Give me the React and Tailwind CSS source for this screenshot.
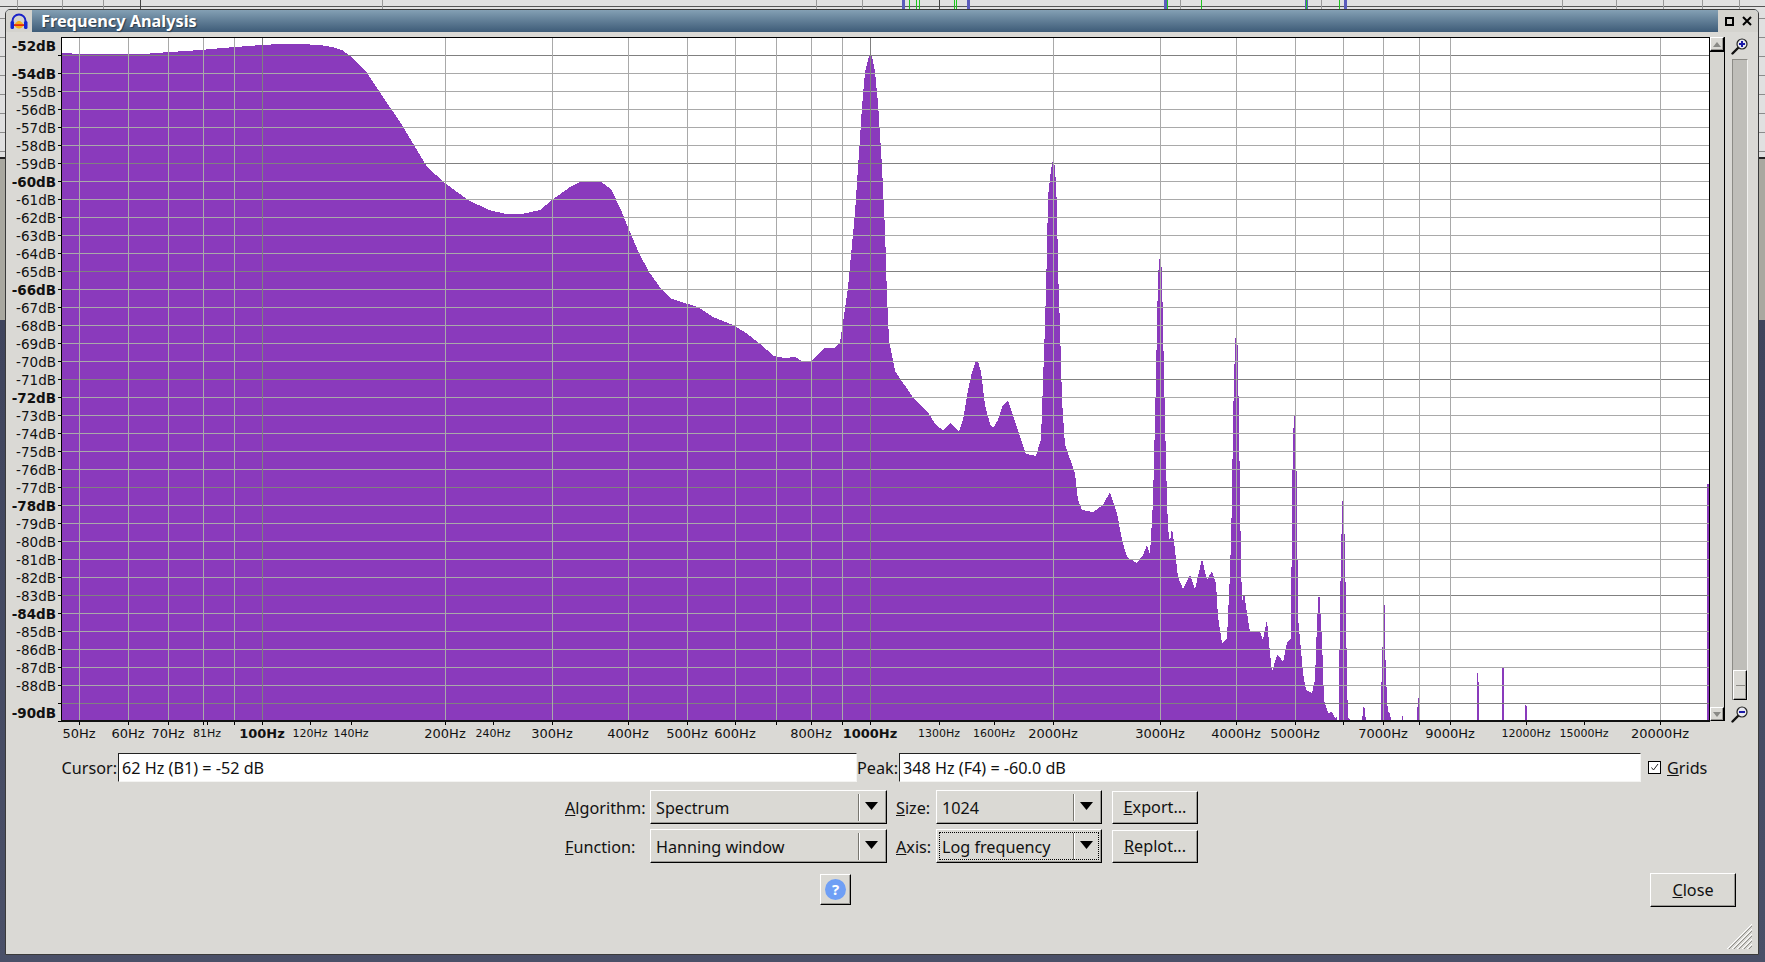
import React from 'react';

// real page pixels, traced from the plot
const curve = [
  [62,53],[72,53.5],[127,54],[150,53.5],[170,52],[200,50],[235,47],[262,45],[280,44],[300,44],[320,45],[332,47],[342,50],[350,56],[367,73],[383,97],[400,122],[417,150],[427,167],[445,183],[468,200],[489,210],[506,214],[522,214],[540,210],[552,200],[570,187],[580,182],[601,182],[611,189],[621,210],[629,230],[639,253],[649,272],[662,290],[672,299],[688,304],[698,307],[713,317],[733,325],[746,333],[759,343],[774,356],[784,358],[795,357],[802,361],[811,361],[824,348],[834,348],[840,342],[843,323],[848,287],[855,213],[862,107],[865,72],[869,56],[872,56],[875,72],[878,103],[882,167],[885,230],[887,297],[889,340],[895,371],[912,396],[929,414],[936,425],[943,430],[951,423],[959,432],[963,420],[968,390],[972,372],[976,361],[978,361],[981,372],[985,405],[990,424],[993,428],[998,420],[1003,405],[1008,400],[1012,412],[1019,433],[1026,454],[1036,456],[1041,439],[1045,325],[1047,250],[1048,197],[1051,170],[1053,160],[1055,167],[1057,207],[1058,270],[1060,327],[1062,400],[1065,445],[1075,473],[1078,500],[1082,510],[1093,512],[1103,505],[1110,492],[1117,513],[1122,540],[1127,557],[1137,563],[1143,555],[1147,545],[1150,554],[1152,520],[1153,500],[1155,420],[1157,327],[1158,275],[1159.5,259],[1161,259],[1162,275],[1163,327],[1165,420],[1167,500],[1168,528],[1170,542],[1172,528],[1175,550],[1178,577],[1183,589],[1190,575],[1195,589],[1202,559],[1207,580],[1212,571],[1216,583],[1218,617],[1222,643],[1227,638],[1230,573],[1232,500],[1233,420],[1235,345],[1235.5,338],[1237,338],[1237.5,345],[1239,420],[1240,500],[1241,560],[1242,603],[1244,593],[1247,613],[1250,632],[1260,632],[1263,640],[1267,620],[1269,643],[1272,672],[1277,655],[1280,657],[1283,662],[1287,643],[1291,638],[1292,500],[1293,440],[1294,416],[1295.5,416],[1296,440],[1297,500],[1298,617],[1303,673],[1306,690],[1312,693],[1315,680],[1317,623],[1319,588],[1322,640],[1324,700],[1328,713],[1332,712],[1335,718],[1337,717],[1337,720],[1339,720],[1339,683],[1341,548],[1342,520],[1342,501],[1344,501],[1344,520],[1345,548],[1347,680],[1348,718],[1350,720],
  [1362,720],[1364,703],[1365,713],[1366,720],[1381,720],[1381,700],[1383,630],[1384,605],[1385,605],[1385,647],[1387,700],[1388,712],[1390,713],[1391,720],[1402,720],[1402,716],[1403,716],[1403,720],[1417,720],[1417,711],[1419,694],[1420,694],[1420,720],[1450,720],[1450,688],[1451,688],[1451,720],[1477,720],[1477,663],[1478,682],[1479,682],[1479,720],[1502,720],[1502,667],[1504,667],[1504,720],[1525,720],[1525,704],[1527,707],[1527,720],[1707,720],[1707,484],[1709,484],[1709,720],[62,720],
];

const fx = (f) => Math.round(262.3 + 607.6 * Math.log10(f / 100));

const gridFreqs = [50,60,70,80,90,100,200,300,400,500,600,700,800,900,1000,2000,3000,4000,5000,6000,7000,8000,9000,20000];
const tickFreqs = [...gridFreqs,81,120,140,240,1300,1600,12000,15000];

const dbRows = [];
for (let db = 54; db <= 88; db++) dbRows.push(db);

const hzLabels = [
  [50],[60],[70],[81,'s'],[100,'b'],[120,'s'],[140,'s'],[200],[240,'s'],[300],[400],[500],[600],[800],[1000,'b'],
  [1300,'s'],[1600,'s'],[2000],[3000],[4000],[5000],[7000],[9000],[12000,'s'],[15000,'s'],[20000],
];

const bevel = 'border-t border-l border-t-white border-l-white border-r border-b border-r-black border-b-black shadow-[inset_-1px_-1px_0_#9a9995]';
const field = 'h-[29px] bg-white border-t border-l border-t-[#222] border-l-[#222] border-r border-b border-r-[#f4f4f2] border-b-[#f4f4f2] pl-[3px] pt-[2px] flex items-center text-[#111]';

const Plot = () => (
  <svg width="1654" height="690" viewBox="56 37 1654 690" shapeRendering="crispEdges" className="block shrink-0">
    <rect x="62" y="37" width="1647" height="684" fill="#fff" />
    <polygon points={curve.map((p) => p.join(',')).join(' ')} fill="#8a3abc" />
    {Array.from({ length: 38 }, (_, i) => (
      <g key={i}>
        <rect x="62" y={55 + 18 * i} width="1647" height="1" fill={(i + 1) % 6 === 1 ? '#808080' : '#a9a9a9'} />
        <rect x="58" y={55 + 18 * i} width="3" height="1" fill="#000" />
      </g>
    ))}
    {gridFreqs.map((f) => (
      <rect key={f} x={fx(f)} y="38" width="1" height="683" fill={f === 100 || f === 1000 ? '#808080' : '#a9a9a9'} />
    ))}
    {tickFreqs.map((f) => (
      <rect key={f} x={fx(f)} y="721" width="1" height="4" fill="#000" />
    ))}
    <rect x="61" y="37" width="1" height="685" fill="#000" />
    <rect x="61" y="37" width="1649" height="1" fill="#000" />
    <rect x="1709" y="37" width="1" height="685" fill="#000" />
    <rect x="61" y="720" width="1649" height="2" fill="#111" />
  </svg>
);

const Headphones = () => (
  <svg width="18" height="17" viewBox="0 0 18 17">
    <path d="M2.5 10 V8 a6.5 6.5 0 0 1 13 0 V10" fill="none" stroke="#1a22c8" strokeWidth="2" />
    <rect x="0.5" y="8" width="3.5" height="8" rx="1.5" fill="#1426d0" />
    <rect x="14" y="8" width="3.5" height="8" rx="1.5" fill="#1426d0" />
    <path d="M4 12 L6 9.5 L8 8 L10 8 L12 9.5 L14 12 L12 14.5 L10 15.5 L8 15.5 L6 14.5 Z" fill="#f7b11b" />
    <rect x="4" y="11.2" width="10" height="1.8" fill="#e32b12" />
  </svg>
);

const Magnifier = ({ minus }) => (
  <svg width="18" height="18" viewBox="0 0 18 18" className="block">
    <path d="M1.5 16.5 L7 11" stroke="#111" strokeWidth="2.4" strokeLinecap="round" />
    <circle cx="11" cy="7" r="5" fill="#e8e8f0" stroke="#222" strokeWidth="1.2" />
    <rect x="8" y="6" width="6" height="2" fill="#1a1aa8" />
    {!minus && <rect x="10" y="4" width="2" height="6" fill="#1a1aa8" />}
  </svg>
);

const Arrow = () => (
  <svg width="13" height="8" viewBox="0 0 13 8" className="block">
    <path d="M0 0 H13 L6.5 8 Z" fill="#000" />
  </svg>
);

const Combo = ({ text, width, focus }) => (
  <div className={`relative h-[34px] flex items-center ${width} ${bevel} bg-[#dad9d4]`}>
    <span className="pl-[5px] flex-1 text-[#111] pt-[2px]">{text}</span>
    <span className="h-[27px] w-[2px] border-l border-l-[#77766f] border-r border-r-white" />
    <span className="w-[26px] flex justify-center -mt-[3px] pr-[4px]"><Arrow /></span>
    {focus && <span className="absolute inset-[2px] border border-dotted border-black" />}
  </div>
);

const Btn = ({ children, className }) => (
  <button className={`flex items-center justify-center bg-[#dad9d4] text-[#111] ${bevel} ${className}`}>{children}</button>
);

export default function App() {
  return (
    <div className="relative w-screen h-screen overflow-hidden bg-[#474c63] font-['Noto_Sans',sans-serif] text-[16.2px]">
      {/* program behind the dialog */}
      <div className="flex flex-col h-full">
        <div className="h-[157px] bg-[#e0e0e0] bg-[repeating-linear-gradient(180deg,#e0e0e0_0,#e0e0e0_18px,#8c8c8c_18px,#8c8c8c_19px)]" />
        <div className="h-[163px] bg-[#a9a8a0] border-t-2 border-t-[#222]" />
        <div className="flex-1 bg-gradient-to-b from-[#3f445c] to-[#4a5068]" />
      </div>
      <svg width="1765" height="9" viewBox="0 0 1765 9" shapeRendering="crispEdges" className="absolute left-0 top-0">
        <rect width="1765" height="9" fill="#e2e2e2" />
        <rect y="6" width="1765" height="1" fill="#555" />
        {[17,62,103,382,816,862,1180,1321,1562,1616,1663,1702,1739].map((x) => <rect key={x} x={x} width="1" height="9" fill="#999" />)}
        {[140,939].map((x) => <rect key={x} x={x} width="1" height="9" fill="#444" />)}
        {[902,967,1164,1305,1344].map((x) => <rect key={x} x={x} width="3" height="9" fill="#5c5cbc" />)}
        {[909,916,919,954,956,1167,1201,1306,1339].map((x) => <rect key={x} x={x} width="1" height="9" fill="#1fc41f" />)}
      </svg>

      {/* dialog window */}
      <div className="absolute left-[5px] top-[9px] w-[1754px] h-[946px] bg-[#dad9d5] border border-[#3a3a3a] rounded-t-[5px] overflow-hidden">
        <div className="flex h-[22px] bg-gradient-to-b from-[#84a0b4] to-[#3e5c78]">
          <div className="w-[26px] bg-[#d4d3ce] flex items-center justify-center"><Headphones /></div>
          <span className="pl-[9px] leading-[22px] font-bold text-[16.3px] text-white [text-shadow:1px_1px_1px_#2a3a4a]">Frequency Analysis</span>
          <div className="ml-auto w-[40px] bg-[#d4d3ce] flex items-center justify-center gap-[8px]">
            <span className="w-[9px] h-[9px] border-2 border-black" />
            <svg width="10" height="10" viewBox="0 0 10 10"><path d="M1 1 L9 9 M9 1 L1 9" stroke="#000" strokeWidth="2" /></svg>
          </div>
        </div>

        {/* plot with its rulers */}
        <div className="flex h-[695px] pt-[5px]">
          <div className="w-[50px] shrink-0 text-right font-['DejaVu_Sans',sans-serif] text-[13.5px] leading-[18px] text-[#111]">
            <div className="h-[28px] font-bold">-52dB</div>
            {dbRows.map((db) => (
              <div key={db} className={`h-[18px] ${db % 6 === 0 ? 'font-bold' : ''}`}>-{db}dB</div>
            ))}
            <div className="h-[18px] mt-[9px] font-bold">-90dB</div>
          </div>
          <Plot />
          {/* vertical scrollbar */}
          <div className="w-[15px] h-[684px] flex flex-col bg-[#d6d5d0] border-r border-r-black shrink-0">
            <div className={`h-[14px] bg-[#dad9d4] ${bevel} flex items-center justify-center`}>
              <span className="border-x-[4px] border-x-transparent border-b-[5px] border-b-[#8a8a86]" />
            </div>
            <div className="flex-1 border-t border-t-black" />
            <div className={`h-[14px] bg-[#dad9d4] ${bevel} flex items-center justify-center`}>
              <span className="border-x-[4px] border-x-transparent border-t-[5px] border-t-[#8a8a86]" />
            </div>
          </div>
          {/* vertical zoom slider */}
          <div className="w-[33px] h-[686px] flex flex-col items-center pr-[3px] shrink-0">
            <Magnifier />
            <div className="mt-[4px] flex-1 w-[16px] bg-[#bfbeb9] border-l border-l-[#8c8b86] border-t border-t-[#8c8b86] border-r border-r-[#f2f2f0] flex flex-col justify-end mb-[5px]">
              <div className={`h-[30px] bg-[#dad9d4] ${bevel} flex items-center justify-center`}>
                <span className="w-[9px] h-px bg-[#8c8b86]" />
              </div>
            </div>
            <Magnifier minus />
          </div>
        </div>

        {/* frequency ruler */}
        <div className="relative h-[14px] font-['DejaVu_Sans',sans-serif] leading-[14px] text-[#111]">
          {hzLabels.map(([f, kind]) => (
            <span
              key={f}
              className={`absolute top-0 -translate-x-1/2 whitespace-nowrap ${kind === 's' ? 'text-[11px]' : 'text-[13px]'} ${kind === 'b' ? 'font-bold' : ''}`}
              style={{ left: fx(f) - 6 }}
            >
              {f}Hz
            </span>
          ))}
        </div>

        {/* cursor and peak read-outs */}
        <div className="flex items-center mt-[12px] h-[29px] text-[#111]">
          <span className="w-[112px] text-right pr-[1px] pt-[2px] whitespace-nowrap">Cursor:</span>
          <div className={`w-[739px] ${field}`}>62 Hz (B1) = -52 dB</div>
          <span className="w-[42px] text-right pr-[1px] pt-[2px]">Peak:</span>
          <div className={`w-[742px] ${field}`}>348 Hz (F4) = -60.0 dB</div>
          <span className="ml-[7px] w-[13px] h-[13px] bg-white border border-black flex items-center justify-center">
            <svg width="9" height="9" viewBox="0 0 9 9"><path d="M1.5 4.5 L3.5 7 L8 1" fill="none" stroke="#222" strokeWidth="1" /></svg>
          </span>
          <span className="ml-[6px] pt-[2px]"><u>G</u>rids</span>
        </div>

        <div className="flex items-center mt-[8px] ml-[559px] text-[#111]">
          <span className="w-[85px] pt-[2px]"><u>A</u>lgorithm:</span>
          <Combo text="Spectrum" width="w-[237px]" />
          <span className="w-[40px] ml-[9px] pt-[2px]"><u>S</u>ize:</span>
          <Combo text="1024" width="w-[166px]" />
          <Btn className="ml-[10px] w-[86px] h-[33px]"><span><u>E</u>xport...</span></Btn>
        </div>

        <div className="flex items-center mt-[5px] ml-[559px] text-[#111]">
          <span className="w-[85px] pt-[2px]"><u>F</u>unction:</span>
          <Combo text="Hanning window" width="w-[237px]" />
          <span className="w-[40px] ml-[9px] pt-[2px]"><u>A</u>xis:</span>
          <Combo text="Log frequency" width="w-[166px]" focus />
          <Btn className="ml-[10px] w-[86px] h-[33px]"><span><u>R</u>eplot...</span></Btn>
        </div>

        <div className="flex items-start mt-[10px] h-[34px]">
          <Btn className="ml-[814px] mt-[1px] w-[31px] h-[31px]">
            <span className="w-[21px] h-[21px] rounded-full bg-[#6f9ff5] text-white text-[15px] leading-[21px] font-bold text-center">?</span>
          </Btn>
          <Btn className="ml-[799px] w-[86px] h-[34px]"><span><u>C</u>lose</span></Btn>
        </div>

        {/* resize grip */}
        <svg width="26" height="26" viewBox="0 0 26 26" shapeRendering="crispEdges" className="absolute right-[5px] bottom-[4px]">
          {[3,8,13,18,23].map((d) => (
            <g key={d}>
              <path d={`M${26 - d - 3} 25 L25 ${26 - d - 3}`} stroke="#fff" strokeWidth="1" />
              <path d={`M${26 - d - 1} 25 L25 ${26 - d - 1}`} stroke="#8e8d88" strokeWidth="1" />
            </g>
          ))}
        </svg>
      </div>
    </div>
  );
}
